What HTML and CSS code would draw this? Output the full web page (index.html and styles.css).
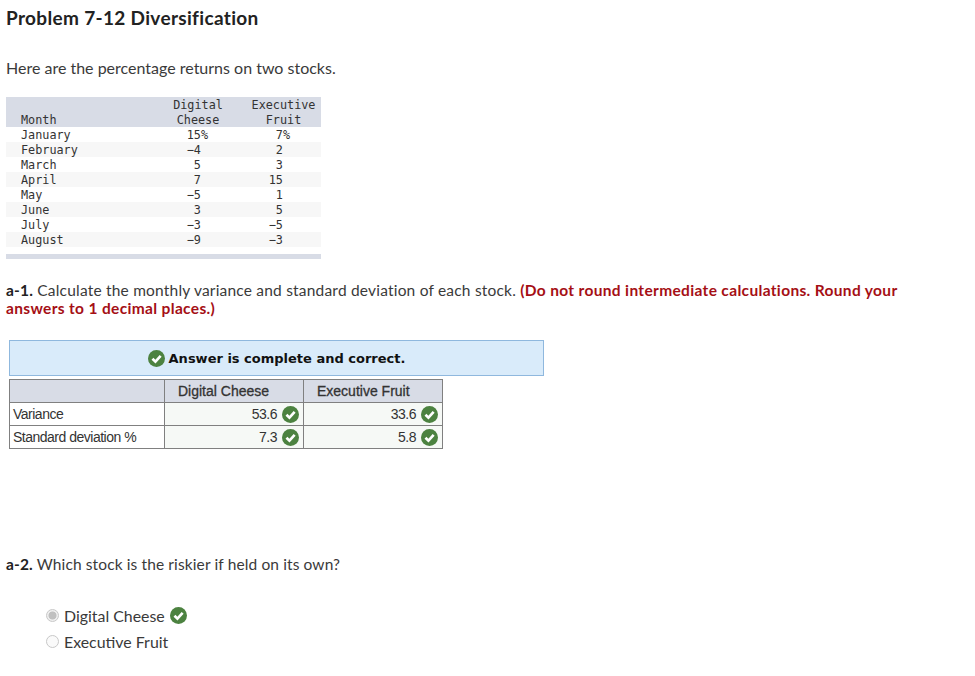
FILE: index.html
```html
<!DOCTYPE html>
<html lang="en">
<head>
<meta charset="utf-8">
<title>Problem 7-12 Diversification</title>
<link rel="stylesheet" href="styles.css">
</head>
<body>
<svg class="defs" width="0" height="0" aria-hidden="true"><defs>
<symbol id="ok" viewBox="0 0 16 16"><circle cx="8" cy="8" r="8" fill="#4c8240"/><path d="M4.2 8.2 7 11l4.9-5.5" fill="none" stroke="#fff" stroke-width="2.5"/></symbol>
</defs></svg>
<h1 class="title">Problem 7-12 Diversification</h1>
<p class="intro">Here are the percentage returns on two stocks.</p>
<table class="data">
<thead>
<tr><th class="month">Month</th><th class="num1">Digital<br>Cheese</th><th class="num2">Executive<br>Fruit</th></tr>
</thead>
<tbody>
<tr><td class="month">January</td><td class="num1">15%</td><td class="num2">7%</td></tr>
<tr><td class="month">February</td><td class="num1">−4&nbsp;</td><td class="num2">2&nbsp;</td></tr>
<tr><td class="month">March</td><td class="num1">5&nbsp;</td><td class="num2">3&nbsp;</td></tr>
<tr><td class="month">April</td><td class="num1">7&nbsp;</td><td class="num2">15&nbsp;</td></tr>
<tr><td class="month">May</td><td class="num1">−5&nbsp;</td><td class="num2">1&nbsp;</td></tr>
<tr><td class="month">June</td><td class="num1">3&nbsp;</td><td class="num2">5&nbsp;</td></tr>
<tr><td class="month">July</td><td class="num1">−3&nbsp;</td><td class="num2">−5&nbsp;</td></tr>
<tr><td class="month">August</td><td class="num1">−9&nbsp;</td><td class="num2">−3&nbsp;</td></tr>
</tbody>
</table>
<div class="rule"></div>
<p class="question q1"><b>a-1.</b> Calculate the monthly variance and standard deviation of each stock. <strong class="warn">(Do not round intermediate calculations. Round your answers to 1 decimal places.)</strong></p>
<div class="banner"><svg class="ico"><use href="#ok"/></svg><span>Answer is complete and correct.</span></div>
<table class="answers">
<thead><tr><th class="a-label"></th><th class="a-col1">Digital Cheese</th><th class="a-col2">Executive Fruit</th></tr></thead>
<tbody>
<tr><td class="a-label">Variance</td><td class="val">53.6<svg class="ico"><use href="#ok"/></svg></td><td class="val">33.6<svg class="ico"><use href="#ok"/></svg></td></tr>
<tr><td class="a-label">Standard deviation %</td><td class="val">7.3<svg class="ico"><use href="#ok"/></svg></td><td class="val">5.8<svg class="ico"><use href="#ok"/></svg></td></tr>
</tbody>
</table>
<p class="question q2"><b>a-2.</b> Which stock is the riskier if held on its own?</p>
<div class="options">
<div class="opt"><span class="radio on"></span><span>Digital Cheese</span><svg class="ico"><use href="#ok"/></svg></div>
<div class="opt"><span class="radio"></span><span>Executive Fruit</span></div>
</div>
</body>
</html>
```
FILE: styles.css
```css
html, body { margin: 0; padding: 0; background: #fff; }
body {
  padding: 7px 0 0 6px;
  width: 969px;
  box-sizing: border-box;
  height: 676px;
  overflow: hidden;
  font-family: Lato, "Liberation Sans", sans-serif;
  font-size: 16px;
  color: #2d2d2d;
}
.defs { position: absolute; }
.title { margin: 0; font-size: 19px; line-height: 22px; font-weight: 700; color: #222; letter-spacing: 0.33px; }
.intro { margin: 28px 0 0; line-height: 22px; font-size: 16px; color: #3a3a3a; }
.data {
  margin-top: 18px;
  border-collapse: collapse;
  width: 315px;
  table-layout: fixed;
  font-family: "DejaVu Sans Mono", monospace;
  font-size: 11.8px;
  color: #333;
}
.data th, .data td { box-sizing: border-box; padding: 1px 0 0; line-height: 14px; }
.data th { background: #d8dce6; font-weight: 400; vertical-align: bottom; height: 30px; line-height: 14.5px; }
.data td { height: 15px; }
.data tbody tr:nth-child(even) td { background: #f7f7f7; }
.data .month { text-align: left; padding-left: 15px; width: 144px; }
.data .num1 { width: 96px; }
.data td.num1 { text-align: right; padding-right: 38px; }
.data td.num2 { text-align: right; padding-right: 31px; }
.data th.num1, .data th.num2 { text-align: center; }
.rule { width: 315px; height: 5px; background: #d8dce6; margin-top: 7px; }
.question { margin: 0; line-height: 18px; font-size: 15.5px; letter-spacing: 0.2px; color: #3a3a3a; }
.question b { color: #222; }
.q1 { margin-top: 22px; width: 930px; }
.warn { color: #a50f15; letter-spacing: 0.34px; }
.banner {
  margin: 23px 0 0 3px;
  width: 535px;
  height: 36px;
  box-sizing: border-box;
  background: #d9ebfa;
  border: 1px solid #8fb8de;
  display: flex;
  align-items: center;
  justify-content: center;
  gap: 4px;
  font-family: "DejaVu Sans", sans-serif;
  font-weight: 700;
  font-size: 13px;
  color: #111;
}
.ico { width: 17px; height: 17px; flex: none; }
.answers {
  margin: 3px 0 0 3px;
  border-collapse: collapse;
  table-layout: fixed;
  width: 434px;
  font-family: "Liberation Sans", sans-serif;
  font-size: 14px;
  letter-spacing: -0.5px;
  color: #333;
}
.answers th, .answers td { border: 1px solid #808080; padding: 0; height: 22px; }
.answers th { background: #d8dce6; font-weight: 400; text-align: left; padding-left: 13px; color: #333; letter-spacing: 0; -webkit-text-stroke: 0.3px #333; }
.answers .a-label { width: 155px; background: #fff; text-align: left; padding-left: 3px; box-sizing: border-box; }
.answers th.a-label { background: #d8dce6; }
.answers .a-col1 { width: 139px; box-sizing: border-box; }
.val { background: #f6f9f6; text-align: right; padding-right: 4px !important; }
.val .ico { vertical-align: -4px; margin-left: 5px; }
.q2 { margin-top: 106px; letter-spacing: 0.12px; }
.options { margin: 29px 0 0 40px; }
.opt { display: flex; align-items: center; height: 26px; font-size: 15.9px; color: #3a3a3a; gap: 5px; }
.radio { width: 13px; height: 13px; border-radius: 50%; border: 1px solid #c8c8c8; background: #fafafa; box-sizing: border-box; flex: none; }
.radio.on { background: radial-gradient(circle, #c0c0c0 0 3.6px, #efefef 4.4px); }
```
